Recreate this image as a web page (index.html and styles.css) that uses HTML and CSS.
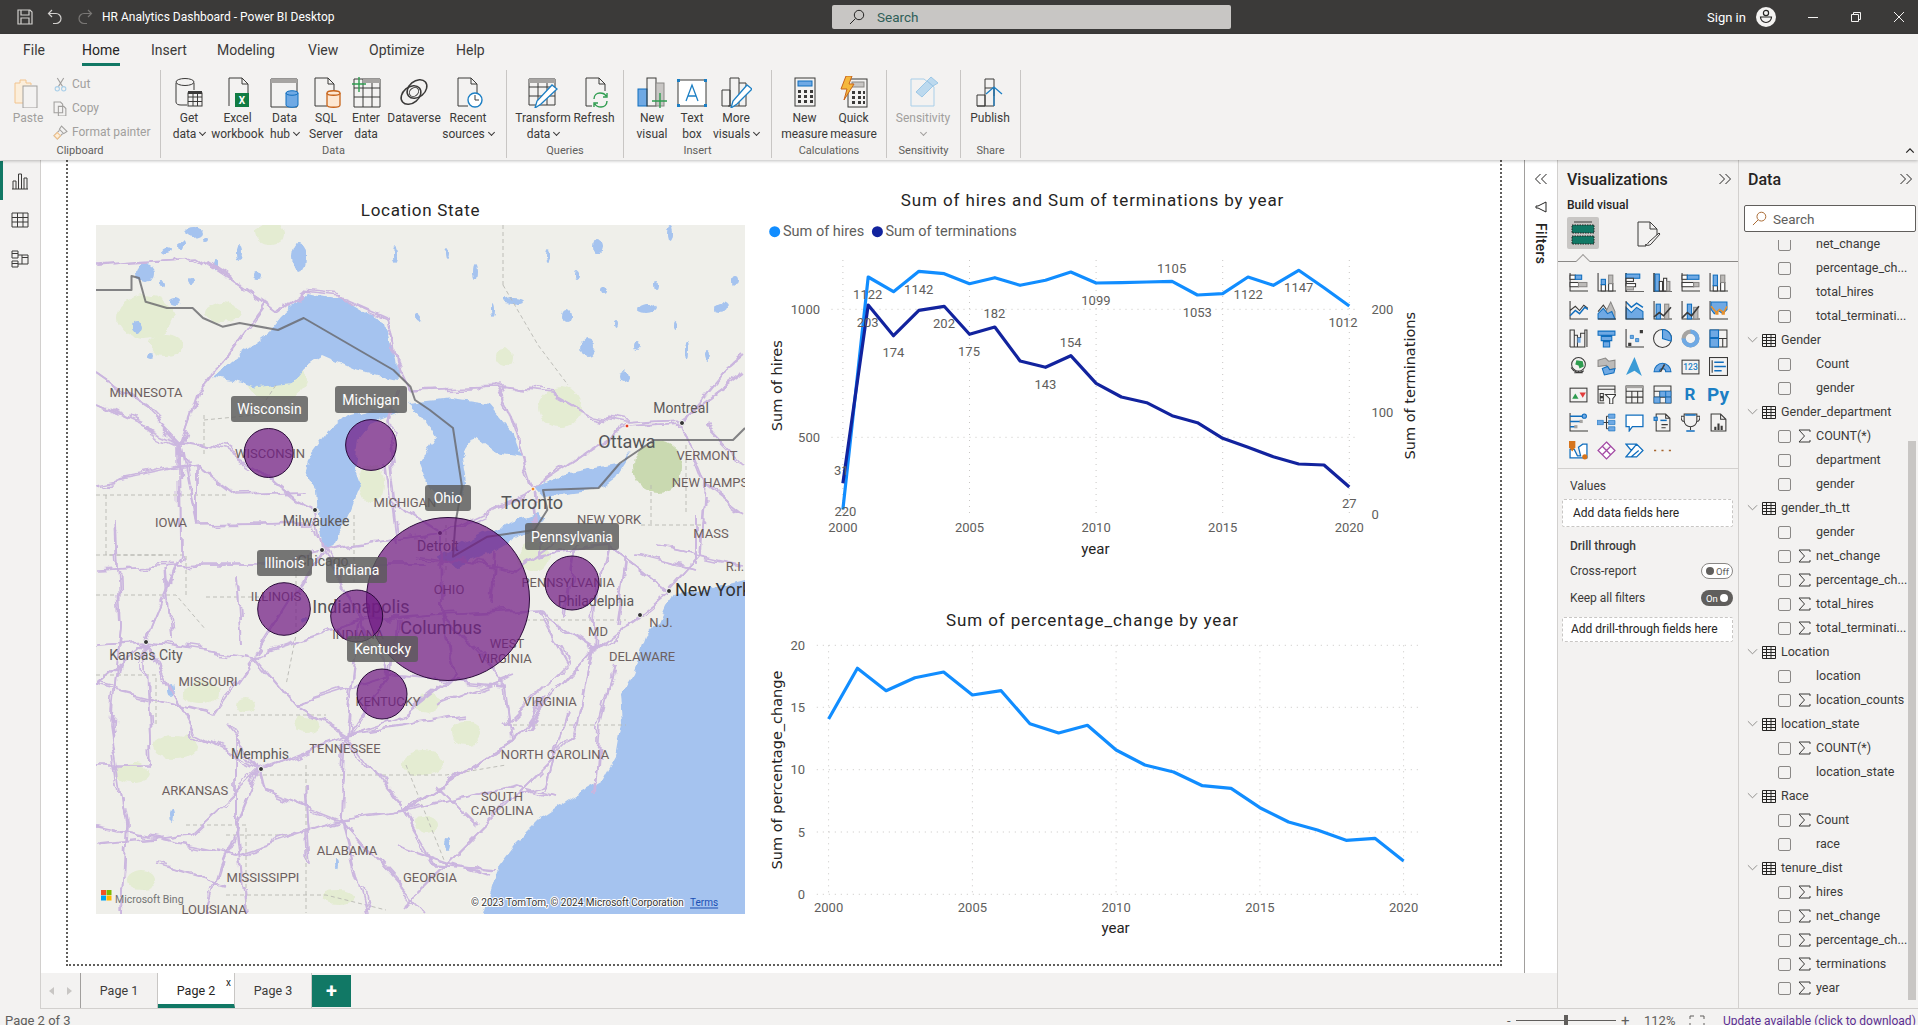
FILE: index.html
```html
<!DOCTYPE html>
<html lang="en">
<head>
    <meta charset="UTF-8">
    <title>HR Analytics Dashboard - Power BI Desktop</title>
    <link rel="stylesheet" href="styles.css">
</head>
<body>
<svg class="defs" width="0" height="0">
    <filter id="wig" x="-5%" y="-5%" width="110%" height="110%">
        <feTurbulence type="fractalNoise" baseFrequency="0.035" numOctaves="3" seed="4"/>
        <feDisplacementMap in="SourceGraphic" scale="11" xChannelSelector="R" yChannelSelector="G"/>
    </filter>
    <filter id="wig-fine" x="-5%" y="-5%" width="110%" height="110%">
        <feTurbulence type="fractalNoise" baseFrequency="0.07" numOctaves="3" seed="9"/>
        <feDisplacementMap in="SourceGraphic" scale="9" xChannelSelector="R" yChannelSelector="G"/>
    </filter>
    <symbol id="sg" viewBox="0 0 13 14"><path d="M12 3V1H1l5.5 6L1 13h11v-2"/></symbol>
    <symbol id="tb" viewBox="0 0 14 14"><path d="M.5 1.5h13v12H.5zM.5 4.5h13M.5 7.5h13M.5 10.5h13M4.5 1.5v12M9 1.5v12"/></symbol>
    <symbol id="cv" viewBox="0 0 12 8"><path d="M1 1l5 5 5-5"/></symbol>
    <symbol id="dc" viewBox="0 0 14 12"><path d="M6.5 1l-5 5 5 5M12.5 1l-5 5 5 5"/></symbol>
    <symbol id="dr" viewBox="0 0 14 12"><path d="M1.5 1l5 5-5 5M7.5 1l5 5-5 5"/></symbol>
    <symbol id="lens" viewBox="0 0 16 16"><circle cx="10" cy="6" r="4.7"/><path d="M6.5 9.5L1 15"/></symbol>
</svg>

<header class="titlebar">
    <svg class="tb-icon" viewBox="0 0 16 16"><path d="M1 1h12l2 2v12H1zM4 1v5h8V1M4 15v-6h8v6"/></svg>
    <svg class="tb-icon undo" viewBox="0 0 16 16"><path d="M5 1L1.5 4.5 5 8M2 4.5h7a5 5 0 0 1 0 10H6"/></svg>
    <svg class="tb-icon redo" viewBox="0 0 16 16"><path d="M11 1l3.5 3.5L11 8M14 4.5H7a5 5 0 0 0 0 10h3"/></svg>
    <div class="app-title">HR Analytics Dashboard - Power BI Desktop</div>
    <div class="global-search">
        <svg class="lens-dark"><use href="#lens"/></svg>
        <span>Search</span>
    </div>
    <div class="sign-in">Sign in</div>
    <svg class="avatar" viewBox="0 0 20 20"><circle cx="10" cy="10" r="10" class="av-bg"/><circle cx="10" cy="6" r="2.6" class="av-line"/><path class="av-line" d="M4.5 10h11a5.500 5.500 0 0 1-11 0z"/></svg>
    <svg class="win-btn" viewBox="0 0 12 12"><path d="M1 6.500h10"/></svg>
    <svg class="win-btn" viewBox="0 0 12 12"><path d="M1.500 3.500h7v7h-7zM3.500 3.500v-2h7v7h-2"/></svg>
    <svg class="win-btn" viewBox="0 0 12 12"><path d="M1 1l10 10M11 1L1 11"/></svg>
</header>

<section class="ribbon">
    <nav class="ribbon-tabs">
        <span>File</span>
        <span class="tab-active">Home</span>
        <span>Insert</span>
        <span>Modeling</span>
        <span>View</span>
        <span>Optimize</span>
        <span>Help</span>
    </nav>
    <div class="ribbon-body">
        <div class="group group-clipboard">
            <div class="group-items">
                <div class="rb-btn off w40">
                    <svg class="rb-icon" viewBox="0 0 32 32"><path class="o" d="M11 27H3V7h5V4h6v3h5v2"/><rect class="g0" x="11" y="10" width="14" height="22"/></svg>
                    <span>Paste</span>
                </div>
                <ul class="clip-list">
                    <li><svg viewBox="0 0 14 14"><path class="s-off" d="M4 1l5 8M10 1L5 9"/><circle class="s-blue" cx="4" cy="11" r="2"/><circle class="s-blue" cx="10" cy="11" r="2"/></svg>Cut</li>
                    <li><svg viewBox="0 0 14 14"><path class="s-off" d="M1 1h6l2 2v8H1zM5 5h5l2 2v7H5z"/></svg>Copy</li>
                    <li><svg viewBox="0 0 14 14"><path class="s-off" d="M8 1l5 5-3 2-4-4zM6 5L1 10l3 3 5-5"/><path class="o" d="M1 10l3 3 3-3-3-3z"/></svg>Format painter</li>
                </ul>
            </div>
            <div class="group-label">Clipboard</div>
        </div>

        <div class="group group-data">
            <div class="group-items">
                <div class="rb-btn w48">
                    <svg class="rb-icon" viewBox="0 0 32 32"><path class="d" d="M3 7v19c0 2 2 3 5 3h6M21 14V7"/><ellipse class="d" cx="12" cy="6" rx="9" ry="3.5"/><rect class="d" x="15" y="17" width="14" height="13"/><path class="d" d="M15 21h14M15 25.5h14M20 17v13M24.5 17v13"/><rect class="fill-d" x="15" y="15" width="14" height="3"/></svg>
                    <span>Get<br>data<i class="caret"></i></span>
                </div>
                <div class="rb-btn w49">
                    <svg class="rb-icon" viewBox="0 0 32 32"><path class="d" d="M7 30V2h13l6 6v10M20 2v6h6"/><rect class="fill-xl" x="13" y="17" width="14" height="14"/><text class="xl" x="20" y="28">X</text></svg>
                    <span>Excel<br>workbook</span>
                </div>
                <div class="rb-btn w45">
                    <svg class="rb-icon" viewBox="0 0 32 32"><path class="d" d="M2 3h26v28H2z"/><rect class="fill-g" x="2" y="3" width="26" height="4"/><path class="b" d="M17 17c0-3 12-3 12 0v12c0 3-12 3-12 0z"/><path class="b" d="M17 17c0 3 12 3 12 0"/></svg>
                    <span>Data<br>hub<i class="caret"></i></span>
                </div>
                <div class="rb-btn w38">
                    <svg class="rb-icon" viewBox="0 0 32 32"><path class="d" d="M5 30V2h13l6 6v8M18 2v6h6M5 30h12"/><path class="r" d="M17 17c0-3 13-3 13 0v12c0 3-13 3-13 0z"/><path class="r" d="M17 17c0 3 13 3 13 0"/></svg>
                    <span>SQL<br>Server</span>
                </div>
                <div class="rb-btn w42">
                    <svg class="rb-icon" viewBox="0 0 32 32"><path class="d" d="M4 3h26v28H4zM4 12h26M4 21h26M13 3v28M22 3v28"/><rect class="fill-g" x="13" y="3" width="17" height="4"/><path class="gr" d="M2 8h14M9 1v15"/></svg>
                    <span>Enter<br>data</span>
                </div>
                <div class="rb-btn w54">
                    <svg class="rb-icon" viewBox="0 0 32 32"><ellipse class="d2" cx="13" cy="19" rx="11" ry="8" transform="rotate(-40 13 19)"/><ellipse class="d2" cx="19" cy="13" rx="11" ry="8" transform="rotate(-40 19 13)"/><ellipse class="d" cx="16" cy="16" rx="5" ry="4" transform="rotate(-40 16 16)"/></svg>
                    <span>Dataverse</span>
                </div>
                <div class="rb-btn w54">
                    <svg class="rb-icon" viewBox="0 0 32 32"><path class="d" d="M6 30V2h13l6 6v10M19 2v6h6M6 30h10"/><circle class="clock" cx="23" cy="24" r="7"/><path class="d" d="M23 19v5h4"/></svg>
                    <span>Recent<br>sources<i class="caret"></i></span>
                </div>
            </div>
            <div class="group-label">Data</div>
        </div>

        <div class="group group-queries">
            <div class="group-items">
                <div class="rb-btn w48">
                    <svg class="rb-icon" viewBox="0 0 32 32"><path class="d" d="M2 3h26v26H2zM2 11h26M2 20h26M11 3v26M20 3v26"/><rect class="fill-g" x="2" y="3" width="26" height="4"/><path class="pen" d="M8 32l2-7L25 9l5 4-16 15z"/></svg>
                    <span>Transform<br>data<i class="caret"></i></span>
                </div>
                <div class="rb-btn w54">
                    <svg class="rb-icon" viewBox="0 0 32 32"><path class="d" d="M8 30V2h13l6 6v7M21 2v6h6M8 30h6"/><path class="gr" d="M16 23c0-4 3-6 6-6 3 0 5 1 6 3M29 17v4h-4M29 25c0 4-3 6-6 6-3 0-5-1-6-3M16 31v-4h4"/></svg>
                    <span>Refresh</span>
                </div>
            </div>
            <div class="group-label">Queries</div>
        </div>

        <div class="group group-insert">
            <div class="group-items">
                <div class="rb-btn w40">
                    <svg class="rb-icon" viewBox="0 0 32 32"><rect class="b-fill" x="2" y="13" width="9" height="17"/><rect class="d" x="11" y="2" width="9" height="28"/><rect class="g1" x="20" y="7" width="8" height="23"/><path class="gr" d="M16 25h15M24 17v15"/></svg>
                    <span>New<br>visual</span>
                </div>
                <div class="rb-btn w40">
                    <svg class="rb-icon" viewBox="0 0 32 32"><rect class="d-w" x="2" y="4" width="28" height="26"/><path class="blue-sq" d="M1 3h3v3H1zM28 3h3v3h-3zM1 28h3v3H1zM28 28h3v3h-3z"/><path class="blue" d="M10 25l6-16 6 16M12 20h8"/></svg>
                    <span>Text<br>box</span>
                </div>
                <div class="rb-btn w48">
                    <svg class="rb-icon" viewBox="0 0 32 32"><path class="d" d="M2 14h8v16H2zM10 30V2h9v28M19 7h7v23H8"/><path class="pen" d="M11 32l2-7L27 9l5 4-15 15z"/></svg>
                    <span>More<br>visuals<i class="caret"></i></span>
                </div>
            </div>
            <div class="group-label">Insert</div>
        </div>

        <div class="group group-calc">
            <div class="group-items">
                <div class="rb-btn w49">
                    <svg class="rb-icon" viewBox="0 0 32 32"><rect class="d" x="6" y="2" width="20" height="28"/><rect class="b-fill" x="9" y="5" width="14" height="5"/><path class="keys" d="M9 14h3v3H9zM15 14h3v3h-3zM21 14h3v3h-3zM9 19h3v3H9zM15 19h3v3h-3zM21 19h3v3h-3zM9 24h3v3H9zM15 24h3v3h-3zM21 24h3v3h-3z"/></svg>
                    <span>New<br>measure</span>
                </div>
                <div class="rb-btn w49">
                    <svg class="rb-icon" viewBox="0 0 32 32"><rect class="d" x="10" y="3" width="19" height="28"/><rect class="g1" x="14" y="6" width="12" height="5"/><path class="keys" d="M14 15h3v3h-3zM20 15h3v3h-3zM25 15h2v3h-2zM14 20h3v3h-3zM20 20h3v3h-3zM25 20h2v3h-2zM14 25h3v3h-3zM20 25h3v3h-3zM25 25h2v3h-2z"/><path class="bolt" d="M8 0h6l-3 8h5L6 24l3-11H3z"/></svg>
                    <span>Quick<br>measure</span>
                </div>
            </div>
            <div class="group-label">Calculations</div>
        </div>

        <div class="group group-sens">
            <div class="group-items">
                <div class="rb-btn off w60">
                    <svg class="rb-icon" viewBox="0 0 32 32"><path class="s-blue" d="M4 3h13l10 8v19H4z"/><path class="lb-fill" d="M9 16L20 5l6 5-11 11zM20 5l4-4 7 6-5 3z"/></svg>
                    <span>Sensitivity<br><i class="caret"></i></span>
                </div>
            </div>
            <div class="group-label">Sensitivity</div>
        </div>

        <div class="group group-share">
            <div class="group-items">
                <div class="rb-btn w50">
                    <svg class="rb-icon" viewBox="0 0 32 32"><path class="d" d="M3 30V19h8v11zM11 30V12h9v18zM20 20V3h-9v9M3 30h8"/><path class="blue" d="M20 30V11M12 18l8-7 8 7"/></svg>
                    <span>Publish</span>
                </div>
            </div>
            <div class="group-label">Share</div>
        </div>

        <svg class="ribbon-collapse" viewBox="0 0 12 8"><path d="M1.5 6.5L6 2l4.500 4.500"/></svg>
    </div>
</section>

<main class="workspace">
    <aside class="rail">
        <div class="rail-item rail-active">
            <svg viewBox="0 0 18 18"><path class="d" d="M1 17h16M2 17V9h3v8M7.5 17V2h3v15M13 17V6h3v11"/></svg>
        </div>
        <div class="rail-item">
            <svg viewBox="0 0 18 18"><path class="d" d="M1 2h16v14H1zM1 6.5h16M1 11h16M6.5 2v14M12 2v14"/></svg>
        </div>
        <div class="rail-item">
            <svg viewBox="0 0 18 18"><path class="d" d="M1 1h6v7H1zM1 3.5h6M1 11h6v6H1zM1 13.500h6M11 5h6v9h-6zM11 7.500h6M7 5h4M7 14h4"/></svg>
        </div>
    </aside>

    <div class="center">
        <div class="canvas-row">
            <div class="canvas">
                <div class="report-page">
                    <div class="map-visual">
                        <div class="visual-title">Location State</div>
                        <svg class="map" viewBox="0 0 649 689">
                            <rect class="m-land" width="649" height="689"/>
                            <g class="m-green">
                                <ellipse cx="49" cy="92" rx="28" ry="22"/><ellipse cx="126" cy="87" rx="18" ry="10"/><ellipse cx="173" cy="8" rx="15" ry="12"/>
                                <ellipse cx="464" cy="182" rx="22" ry="20"/><ellipse class="m-green2" cx="562" cy="242" rx="24" ry="26"/><ellipse cx="182" cy="155" rx="30" ry="20"/>
                                <ellipse cx="276" cy="258" rx="12" ry="20"/><ellipse cx="408" cy="132" rx="8" ry="10"/><ellipse cx="438" cy="332" rx="15" ry="15"/>
                                <ellipse cx="105" cy="468" rx="18" ry="12"/><ellipse cx="331" cy="478" rx="12" ry="10"/><ellipse cx="370" cy="508" rx="14" ry="12"/>
                                <ellipse cx="327" cy="538" rx="20" ry="12"/><ellipse cx="79" cy="522" rx="22" ry="12"/><ellipse cx="37" cy="548" rx="18" ry="10"/>
                                <ellipse cx="45" cy="655" rx="15" ry="10"/><ellipse cx="242" cy="672" rx="16" ry="8"/><ellipse cx="70" cy="120" rx="16" ry="12"/>
                                <ellipse cx="330" cy="600" rx="12" ry="8"/><ellipse cx="210" cy="500" rx="12" ry="8"/><ellipse cx="150" cy="480" rx="10" ry="8"/>
                            </g>
                            <g class="m-water">
                                <polygon points="649,355 609,365 579,368 569,382 562,398 550,412 543,432 537,448 524,468 526,498 520,532 507,555 477,572 447,592 421,618 400,645 385,695 655,695 655,355"/>
                                <polygon points="116,152 135,135 173,108 186,92 212,68 250,75 289,98 300,135 302,155 259,145 225,130 208,142 195,158 161,162 139,155"/>
                                <polygon points="293,182 250,192 233,205 216,228 210,248 220,265 223,298 227,323 240,318 255,285 265,258 259,242 262,215 276,198 302,188"/>
                                <polygon points="312,178 357,173 391,178 417,208 426,232 400,228 379,212 366,232 370,258 362,282 332,262 323,238 340,212 327,192"/>
                                <polygon points="340,332 387,308 443,288 451,295 404,322 362,342"/>
                                <polygon points="438,262 473,248 524,238 537,225 520,252 503,265 447,272"/>
                            </g>
                            <g class="m-water m-lakes">
                                <ellipse cx="203" cy="32" rx="7" ry="15"/><ellipse cx="50" cy="48" rx="9" ry="9"/><ellipse cx="97" cy="8" rx="9" ry="5"/>
                                <ellipse cx="143" cy="28" rx="3" ry="6"/><ellipse cx="80" cy="75" rx="6" ry="3"/><ellipse cx="41" cy="102" rx="6" ry="5"/>
                                <ellipse cx="54" cy="131" rx="4" ry="3"/><ellipse cx="417" cy="75" rx="10" ry="3"/><ellipse cx="550" cy="83" rx="10" ry="6"/>
                                <ellipse cx="624" cy="82" rx="7" ry="5"/><ellipse cx="492" cy="122" rx="8" ry="9"/><ellipse cx="528" cy="150" rx="4" ry="6"/>
                                <ellipse cx="502" cy="22" rx="5" ry="8"/><ellipse cx="575" cy="8" rx="3" ry="8"/><ellipse cx="507" cy="65" rx="3" ry="3"/>
                                <ellipse cx="592" cy="125" rx="2" ry="8"/><ellipse cx="396" cy="85" rx="2" ry="6"/><ellipse cx="323" cy="92" rx="3" ry="5"/>
                                <ellipse cx="379" cy="48" rx="2" ry="8"/><ellipse cx="300" cy="30" rx="2" ry="7"/><ellipse cx="470" cy="90" rx="4" ry="6"/>
                                <ellipse cx="540" cy="120" rx="3" ry="5"/><ellipse cx="160" cy="50" rx="4" ry="4"/><ellipse cx="120" cy="40" rx="3" ry="6"/>
                                <ellipse cx="70" cy="25" rx="5" ry="3"/><ellipse cx="610" cy="130" rx="3" ry="6"/><ellipse cx="450" cy="30" rx="2" ry="7"/>
                                <ellipse cx="75" cy="590" rx="2" ry="6"/><ellipse cx="210" cy="395" rx="3" ry="3"/><ellipse cx="75" cy="465" rx="3" ry="6"/><ellipse cx="240" cy="640" rx="2" ry="5"/><ellipse cx="350" cy="620" rx="3" ry="6"/>
                                <ellipse cx="85" cy="20" rx="3" ry="4"/><ellipse cx="110" cy="15" rx="3" ry="3"/><ellipse cx="65" cy="60" rx="3" ry="3"/><ellipse cx="95" cy="55" rx="3" ry="3"/><ellipse cx="560" cy="60" rx="2" ry="5"/>
                                <ellipse cx="580" cy="100" rx="2" ry="4"/><ellipse cx="480" cy="50" rx="2" ry="4"/><ellipse cx="520" cy="100" rx="2" ry="4"/><ellipse cx="350" cy="30" rx="2" ry="6"/><ellipse cx="640" cy="55" rx="3" ry="4"/>
                            </g>
                            <g class="m-dash">
                                <path d="M407 0v60M407 60l35 60 30 40"/>
                                <path d="M108 190v40M108 195l52-5 20-30"/>
                                <path d="M0 270h130M10 270v60h60"/>
                                <path d="M0 330h90v40M110 372h60"/>
                                <path d="M0 370h80l30 35"/>
                                <path d="M200 335v75l-10 50"/>
                                <path d="M258 290v70M350 345v-45"/>
                                <path d="M130 490h100M0 450h60v50"/>
                                <path d="M160 550h190l60-10"/>
                                <path d="M90 600h60v88M130 610h70"/>
                                <path d="M210 540v148M310 540l40 100"/>
                                <path d="M545 300h60M555 260v40M590 220v70"/>
                                <path d="M430 395h100M410 500h120"/>
                                <path d="M130 670h100l60 15"/>
                            </g>
                            <g id="roads" class="m-road">
                                <path d="M0 40L37 37 101 33 135 55 169 78 182 88 208 68 250 73 293 92 302 138 315 165 400 162 456 168 498 192 528 198 584 195 649 148"/>
                                <path d="M84 217L130 225 170 250 200 275 219 285 226 325 344 308 437 264 531 201 586 198M0 147L50 182 84 217"/>
                                <path d="M84 217L100 170 115 152 169 78M84 217L0 180M84 217L85 330 50 417M84 217L100 300"/>
                                <path d="M226 325L170 340 100 340 0 345M226 325L160 430M226 325L264 396 158 433 50 417 0 420"/>
                                <path d="M264 396L345 390 440 385 498 423M264 396L250 510 165 544M264 396L295 450 250 510 246 595"/>
                                <path d="M344 308L345 390 410 460 417 515M344 308L300 280 290 195 300 165M437 264L445 330 512 320 573 366"/>
                                <path d="M437 264L410 180 400 162M586 198L610 260 605 330 573 366M586 198L625 150 649 130"/>
                                <path d="M649 240L610 200M610 260L649 290M573 366L544 390 498 423 417 515 309 587 246 595 170 565 165 544"/>
                                <path d="M498 423L480 510 420 570 370 620 310 680M417 515L309 587M250 510L309 587 420 560 460 570"/>
                                <path d="M165 544L100 510 50 417M165 544L95 610 0 620M165 544L125 640 110 689M246 595L140 630 0 600M246 595L270 689M246 595L330 689"/>
                                <path d="M50 417L0 460M50 417L55 540 0 540M160 433L200 480 295 450 410 460M160 433L120 490 0 460M250 510L200 480"/>
                                <path d="M295 450L300 395M345 390L360 450 310 490 250 510M440 385L470 440 410 500M512 320L500 380 498 423M573 366L512 320"/>
                                <path d="M560 320L649 340M600 290L600 340M540 330L600 345M520 440L505 500 500 570M470 490L450 560 420 570"/>
                                <path d="M0 260L100 240 140 270 210 268M100 300L220 298M210 350L226 325M100 240L100 300M320 330L420 345 470 310"/>
                                <path d="M340 480L420 450M300 620L390 650M165 544L130 500M309 587L340 640 400 645M250 510L370 490"/>
                                <path d="M20 300L25 400 15 500 30 600 25 689M140 510L140 600 150 689M210 560L215 640M60 640L130 660M340 560L380 600M430 500L450 470"/>
                                <path d="M290 240L300 320M240 340L330 340M140 350L145 420M70 345L75 415M400 330L395 380M480 320L470 390M530 330L520 400"/>
                            </g>
                            <use href="#roads" class="m-road-core"/>
                            <path class="m-border" d="M0 65H35.500V51L43 53 49.600 76.700 71 83H96.600L107 93 126.500 101.700 143.600 98 182 105 207.700 93 297.400 145 314.500 161.700 319 175 333.800 185 357 203 366 261.700 359.400 298 357 331.700 391.400 311.700 438.500 305 451.300 285 447 265 502.600 263 524 238 558 215H637L649 203"/>

                            <g class="m-st">
                                <text x="50" y="167">MINNESOTA</text><text x="611" y="230">VERMONT</text><text x="614" y="257">NEW HAMPS</text>
                                <text x="309" y="277">MICHIGAN</text><text x="513" y="294">NEW YORK</text><text x="615" y="308">MASS</text>
                                <text x="75" y="297">IOWA</text><text x="639" y="341">R.I.</text><text x="174" y="228">WISCONSIN</text>
                                <text x="472" y="357">PENNSYLVANIA</text><text x="353" y="364">OHIO</text><text x="180" y="371">ILLINOIS</text>
                                <text x="565" y="397">N.J.</text><text x="502" y="406">MD</text><text x="262" y="409">INDIANA</text>
                                <text x="411" y="418">WEST</text><text x="409" y="433">VIRGINIA</text><text x="546" y="431">DELAWARE</text>
                                <text x="112" y="456">MISSOURI</text><text x="292" y="476">KENTUCKY</text><text x="454" y="476">VIRGINIA</text>
                                <text x="249" y="523">TENNESSEE</text><text x="459" y="529">NORTH CAROLINA</text><text x="99" y="565">ARKANSAS</text>
                                <text x="406" y="571">SOUTH</text><text x="406" y="585">CAROLINA</text><text x="251" y="625">ALABAMA</text>
                                <text x="334" y="652">GEORGIA</text><text x="167" y="652">MISSISSIPPI</text><text x="118" y="684">LOUISIANA</text>
                            </g>
                            <g class="m-ct">
                                <text x="585" y="183">Montreal</text><text x="220" y="296">Milwaukee</text><text x="342" y="321">Detroit</text>
                                <text x="227" y="336">Chicago</text><text x="500" y="376">Philadelphia</text><text x="50" y="430">Kansas City</text><text x="164" y="529">Memphis</text>
                            </g>
                            <g class="m-big">
                                <text x="531" y="216">Ottawa</text><text x="436" y="277">Toronto</text><text x="265" y="381">Indianapolis</text>
                                <text x="345" y="402">Columbus</text><text x="579" y="364" class="m-left">New York</text>
                            </g>
                            <g class="m-dots">
                                <circle cx="219" cy="285" r="2.500"/><circle cx="226" cy="325" r="2.500"/><circle cx="344" cy="308" r="2.500"/><circle cx="586" cy="198" r="2.500"/>
                                <circle cx="573" cy="366" r="2.500"/><circle cx="544" cy="390" r="2.500"/><circle cx="50" cy="417" r="2.500"/><circle cx="165" cy="544" r="2.500"/>
                            </g>
                            <circle class="m-cap" cx="531" cy="201" r="2"/><circle class="m-cap2" cx="437" cy="264" r="2"/>

                            <g class="m-bubble">
                                <circle cx="172.600" cy="228" r="24.500"/><circle cx="275" cy="220" r="25.400"/><circle cx="352" cy="374" r="81.500"/>
                                <circle cx="476" cy="358" r="27"/><circle cx="188" cy="384" r="26.300"/><circle cx="260.700" cy="391" r="26"/><circle cx="286" cy="469" r="25"/>
                            </g>
                            <g class="m-tip">
                                <rect x="135" y="171" width="77" height="26" rx="3"/><rect x="239" y="161" width="72" height="27" rx="3"/><rect x="329" y="260" width="46" height="26" rx="3"/>
                                <rect x="429" y="298" width="94" height="27" rx="3"/><rect x="161" y="325" width="55" height="26" rx="3"/><rect x="230" y="332" width="61" height="26" rx="3"/><rect x="251" y="411" width="71" height="26" rx="3"/>
                            </g>
                            <g class="m-tip-text">
                                <text x="173.500" y="184">Wisconsin</text><text x="275" y="174.500">Michigan</text><text x="352" y="273">Ohio</text>
                                <text x="476" y="311.500">Pennsylvania</text><text x="188.500" y="338">Illinois</text><text x="260.500" y="345">Indiana</text><text x="286.500" y="424">Kentucky</text>
                            </g>
                            <g>
                                <rect class="ms-r" x="5" y="665" width="5" height="5"/><rect class="ms-g" x="10.500" y="665" width="5" height="5"/>
                                <rect class="ms-b" x="5" y="670.500" width="5" height="5"/><rect class="ms-y" x="10.500" y="670.500" width="5" height="5"/>
                            </g>
                            <text class="m-bing" x="19" y="674">Microsoft Bing</text>
                            <text class="m-copy" x="375" y="677">© 2023 TomTom, © 2024 Microsoft Corporation</text>
                            <text class="m-terms" x="594" y="677">Terms</text>
                        </svg>
                    </div>

                    <div class="chart-col">
                        <svg class="chart chart-top" viewBox="0 0 660 400">
                            <text class="c-title" x="332.500" y="20">Sum of hires and Sum of terminations by year</text>
                            <circle class="dot-hires" cx="14.700" cy="51.700" r="5.500"/>
                            <text class="c-legend" x="23" y="51.700">Sum of hires</text>
                            <circle class="dot-term" cx="117.400" cy="51.700" r="5.500"/>
                            <text class="c-legend" x="125.400" y="51.700">Sum of terminations</text>

                            <path class="c-grid" d="M71.500 129.300H597.600M71.500 257.300H597.600M82.900 80V334M209.500 80V334M336.100 80V334M462.700 80V334M589.300 80V334"/>

                            <polyline class="line-hires" points="82.900,329.300 108.200,97 133.500,111.700 158.900,91.300 184.200,93.700 209.500,103.700 234.800,97.700 260.100,105.300 285.500,100.300 310.800,92 336.100,103 361.400,102.700 386.700,102 412.100,101.300 437.400,115 462.700,113.700 488,97 513.300,105.300 538.700,90.300 564,107.700 589.300,126"/>
                            <polyline class="line-term" points="82.900,303.300 108.200,125 133.500,155.700 158.900,130.300 184.200,126.300 209.500,154.300 234.800,147 260.100,181 285.500,187.300 310.800,175.700 336.100,203.300 361.400,217 386.700,222.700 412.100,235.700 437.400,242.700 462.700,258.300 488,267.300 513.300,276.700 538.700,284 564,285 589.300,307"/>

                            <g class="c-tick c-end">
                                <text x="60" y="129.300">1000</text><text x="60" y="257.300">500</text>
                            </g>
                            <g class="c-tick c-start">
                                <text x="611.500" y="129.300">200</text><text x="611.500" y="232.700">100</text><text x="611.500" y="334.300">0</text>
                            </g>
                            <g class="c-tick">
                                <text x="82.900" y="347.700">2000</text><text x="209.500" y="347.700">2005</text><text x="336.100" y="347.700">2010</text><text x="462.700" y="347.700">2015</text><text x="589.300" y="347.700">2020</text>
                            </g>
                            <g class="c-tick">
                                <text x="107.700" y="114.700">1122</text><text x="107.700" y="142.700">203</text><text x="158.700" y="109.700">1142</text>
                                <text x="133.400" y="172.700">174</text><text x="184" y="143.300">202</text><text x="234.400" y="133.700">182</text>
                                <text x="209" y="171.700">175</text><text x="310.600" y="162.700">154</text><text x="285.400" y="204.700">143</text>
                                <text x="335.900" y="120.700">1099</text><text x="411.600" y="88.700">1105</text><text x="437.300" y="132.700">1053</text>
                                <text x="488.200" y="114.700">1122</text><text x="538.700" y="107.300">1147</text><text x="583" y="142.700">1012</text>
                                <text x="81.200" y="290">31</text><text x="85.400" y="331.700">220</text><text x="589.200" y="323.700">27</text>
                            </g>
                            <text class="c-axis" transform="translate(16.800 205.700) rotate(-90)">Sum of hires</text>
                            <text class="c-axis" transform="translate(650 205.700) rotate(-90)">Sum of terminations</text>
                            <text class="c-year" x="335.400" y="369">year</text>
                        </svg>

                        <svg class="chart chart-bottom" viewBox="0 0 660 350">
                            <text class="c-title" x="332.500" y="20">Sum of percentage_change by year</text>
                            <path class="c-grid" d="M56.800 45.300H658M56.800 107.300H658M56.800 169.700H658M56.800 232H658M56.800 294.300H658M68.600 45.300V294.300M212.400 45.300V294.300M356.100 45.300V294.300M499.900 45.300V294.300M643.600 45.300V294.300"/>
                            <polyline class="line-hires" points="68.600,119 97.400,68.300 126.100,90.700 154.900,77.700 183.600,72 212.400,95 241.100,90.700 269.900,123.700 298.600,133 327.400,125.300 356.100,150 384.900,165 413.600,172 442.400,185.700 471.100,188.300 499.900,207.700 528.600,222 557.400,230 586.100,240.300 614.900,238.300 643.600,261"/>
                            <g class="c-tick c-end">
                                <text x="45" y="45.300">20</text><text x="45" y="107.300">15</text><text x="45" y="169.700">10</text><text x="45" y="232">5</text><text x="45" y="294.300">0</text>
                            </g>
                            <g class="c-tick">
                                <text x="68.600" y="307.700">2000</text><text x="212.400" y="307.700">2005</text><text x="356.100" y="307.700">2010</text><text x="499.900" y="307.700">2015</text><text x="643.600" y="307.700">2020</text>
                            </g>
                            <text class="c-axis" transform="translate(16.800 170) rotate(-90)">Sum of percentage_change</text>
                            <text class="c-year" x="355.600" y="328.300">year</text>
                        </svg>
                    </div>
                </div>
            </div>

            <aside class="filters">
                <svg class="chev"><use href="#dc"/></svg>
                <svg class="funnel" viewBox="0 0 12 12"><path d="M11 1L3 5H1v2h2l8 4z"/></svg>
                <div class="filters-label">Filters</div>
            </aside>
        </div>

        <div class="page-tabs">
            <div class="tab-nav"><i class="tri-l"></i><i class="tri-r"></i></div>
            <div class="page-tab">Page 1</div>
            <div class="page-tab page-current">Page 2<span class="tab-x">x</span></div>
            <div class="page-tab">Page 3</div>
            <div class="page-add">+</div>
        </div>
    </div>

    <aside class="vis-pane">
        <div class="pane-head">
            <span>Visualizations</span>
            <svg class="chev"><use href="#dr"/></svg>
        </div>
        <div class="build-label">Build visual</div>
        <div class="build-row">
            <div class="build-active">
                <svg viewBox="0 0 24 26"><path class="d" d="M3 1h18"/><rect class="tg" x="1" y="4" width="22" height="8"/><rect class="tg" x="1" y="15" width="22" height="8"/></svg>
            </div>
            <svg class="format-icon" viewBox="0 0 24 26"><path class="d" d="M1 25V1h12l7 7v6M13 1v7h7M1 25h8"/><path class="d" d="M8 24c3 0 3-3 5-4l9-8 1 1-8 9c-1 2-4 3-7 2z"/></svg>
        </div>
        <div class="vis-sep"><i></i></div>

        <div class="viz-grid">
            <svg viewBox="0 0 18 18"><path class="d" d="M1 0V17H18"/><rect class="w" x="1" y="2" width="5" height="4"/><rect class="b" x="6" y="2" width="6" height="4"/><rect class="w" x="1" y="9" width="8" height="4"/><rect class="g" x="9" y="9" width="8" height="4"/></svg>
            <svg viewBox="0 0 18 18"><path class="d" d="M1 0V17H18"/><rect class="w" x="4" y="11" width="4" height="6"/><rect class="b" x="4" y="6" width="4" height="5"/><rect class="w" x="11" y="10" width="4" height="7"/><rect class="g" x="11" y="2" width="4" height="8"/></svg>
            <svg viewBox="0 0 18 18"><path class="d2" d="M1 0V18H18"/><rect class="b" x="1" y="1" width="13" height="4"/><rect class="w" x="1" y="5" width="7" height="3"/><rect class="w" x="1" y="10" width="9" height="3"/><rect class="g" x="1" y="13" width="7" height="3"/></svg>
            <svg viewBox="0 0 18 18"><path class="d2" d="M1 0V18H18"/><rect class="b" x="2" y="1" width="4" height="16"/><rect class="w" x="6" y="8" width="3" height="9"/><rect class="w" x="10" y="5" width="3" height="12"/><rect class="g" x="13" y="8" width="3" height="9"/></svg>
            <svg viewBox="0 0 18 18"><path class="d" d="M1 0V17H18"/><rect class="w" x="1" y="2" width="5" height="4"/><rect class="b" x="6" y="2" width="11" height="4"/><rect class="w" x="1" y="9" width="11" height="4"/><rect class="g" x="12" y="9" width="5" height="4"/></svg>
            <svg viewBox="0 0 18 18"><path class="d" d="M1 0V17H18"/><rect class="w" x="4" y="12" width="4" height="5"/><rect class="b" x="4" y="2" width="4" height="10"/><rect class="w" x="11" y="9" width="4" height="8"/><rect class="g" x="11" y="2" width="4" height="7"/></svg>

            <svg viewBox="0 0 18 18"><path class="d" d="M1 0V17H18M1 9l5-4 4 4 4-5 4 3"/><path class="bl" d="M1 14l5-5 4 3 5-6 3 2"/></svg>
            <svg viewBox="0 0 18 18"><path class="g" d="M8 11l5-10 4 9v7H8z"/><path class="b" d="M1 17v-5l5-5 4 5 4-2 3 7z"/><path class="d" d="M1 10l5-6 3 4M1 17H18"/></svg>
            <svg viewBox="0 0 18 18"><path class="b" d="M1 6l5 5 5-5 6 4v7H1z"/><path class="bl" d="M1 1l5 5 5-4 6 4"/><path class="d" d="M1 0V17H18"/></svg>
            <svg viewBox="0 0 18 18"><path class="d" d="M1 0V17H18"/><rect class="b" x="3" y="3" width="4" height="14"/><rect class="g" x="11" y="3" width="4" height="14"/><path class="d2" d="M1 15l5-4 4 3 7-8"/></svg>
            <svg viewBox="0 0 18 18"><path class="d" d="M1 0V17H18"/><rect class="b" x="6" y="3" width="4" height="14"/><rect class="g" x="12" y="6" width="4" height="11"/><path class="d2" d="M1 16l5-5 4 3 7-9"/></svg>
            <svg viewBox="0 0 18 18"><path class="d" d="M1 0V17H18"/><path class="b" d="M2 1h15v7l-4 4-4-3-4 3-3-4z"/><path class="oo" d="M2 5l5 6 3-3 4 3 3-6"/><path class="fill-o" d="M6 10h3v3H6zM12 10h3v3h-3z"/></svg>

            <svg viewBox="0 0 18 18"><path class="d" d="M1 17V1h4v16M5 17V6h3v11M8 17V8h3V4h4v13H1M15 17V1h2v16"/><path class="bs" d="M8 8h3v5H8z"/></svg>
            <svg viewBox="0 0 18 18"><path class="b-fill" d="M1 2h16v4H1zM4 7h10v4H4zM6 12h6v5H6z"/></svg>
            <svg viewBox="0 0 18 18"><path class="d" d="M1 0V17H18"/><path class="fill-bl" d="M5 6h3v3H5zM10 9h3v3h-3z"/><path class="fill-d" d="M14 1h3v3h-3zM3 13h3v3H3z"/></svg>
            <svg viewBox="0 0 18 18"><circle class="d" cx="9" cy="9" r="8.5"/><path class="b-fill" d="M9 9V.5a8.500 8.500 0 0 1 8 11z"/></svg>
            <svg viewBox="0 0 18 18"><circle class="g-ring" cx="9" cy="9" r="6.5"/><path class="b-ring" d="M9 2.500a6.500 6.500 0 1 1-6.500 6.500"/></svg>
            <svg viewBox="0 0 18 18"><path class="d" d="M1 1h16v16H1zM9 1v16M9 9h8M13 9v8"/><path class="b-fill" d="M1 1h8v7H1zM1 9h8v8H1z"/></svg>

            <svg viewBox="0 0 18 18"><circle class="d" cx="9" cy="7" r="6.5"/><path class="fill-gr" d="M7 3l6 1 1 5-4 2-1-3-3-1z"/><path class="d" d="M5 15h8M9 13v2M2 10c2 4 8 6 12 3"/></svg>
            <svg viewBox="0 0 18 18"><path class="g" d="M1 3l7-2 3 3 6-1v8l-6 1-2-4-8 1z"/><path class="b" d="M5 11l5-2 2 3 5-1-1 4-9 2z"/></svg>
            <svg viewBox="0 0 18 18"><path class="fill-grad" d="M9 0l7 18-7-5-8 4z"/></svg>
            <svg viewBox="0 0 18 18"><path class="b-fill" d="M1 14a8 8 0 0 1 16 0h-5a3 3 0 0 0-6 0z"/><path class="d2" d="M7 14l4-7"/></svg>
            <svg viewBox="0 0 18 18"><rect class="d" x="1" y="3" width="16" height="13"/><text class="num" x="9" y="9.500">123</text></svg>
            <svg viewBox="0 0 18 18"><rect class="d" x=".5" y=".5" width="17" height="17"/><path class="bl" d="M5 5h9M5 9h11M5 13h7"/><path class="d" d="M3 3v12"/></svg>

            <svg viewBox="0 0 18 18"><rect class="d" x="1" y="3" width="16" height="13"/><path class="fill-gr" d="M3 13l3-5 3 5z"/><path class="fill-red" d="M10 7h6l-3 5z"/></svg>
            <svg viewBox="0 0 18 18"><path class="d" d="M1 17V1h16v7M1 17h6M1 4h16M3 8h3v3H3zM3 12h3v3H3z"/><path class="funnel-d" d="M8 9h10l-3 4v5h-3v-5z"/></svg>
            <svg viewBox="0 0 18 18"><path class="d" d="M1 1h16v16H1zM1 6h16M1 11.5h16M6.5 6v11M12 6v11"/><rect class="fill-g" x="1" y="1" width="16" height="2"/></svg>
            <svg viewBox="0 0 18 18"><path class="d" d="M1 1h16v16H1zM1 6h16M1 11.5h16M6.5 6v11M12 6v11"/><path class="fill-bl" d="M12 6h5v5h-5zM1 11.500h5.500V17H1zM12 11.500h5V17h-5zM6.500 6H12v5H6.500z"/></svg>
            <span class="viz-letter">R</span>
            <span class="viz-letter viz-py">Py</span>

            <svg viewBox="0 0 18 18"><path class="d" d="M1 0V17H18"/><path class="bl" d="M1 3h12M1 8h10M1 13h6"/><circle class="b-fill" cx="14.5" cy="3" r="2"/><rect class="fill-g" x="10" y="6.500" width="3" height="3"/><rect class="fill-g" x="5" y="11.500" width="3" height="3"/></svg>
            <svg viewBox="0 0 18 18"><path class="d" d="M6 9h3M9 3v12M9 3h2M9 9h2M9 15h2"/><path class="fill-bl" d="M0 7h6v4H0zM11 1h6v4h-6zM11 7h6v4h-6zM11 13h6v4h-6z"/></svg>
            <svg viewBox="0 0 18 18"><path class="blue-l" d="M1 2h16v11H7l-3 4v-4H1z"/></svg>
            <svg viewBox="0 0 18 18"><path class="d" d="M3 1h9l4 4v12H3zM12 1v4h4M8 11h6M8 14h4"/><rect class="b-fill" x="1" y="4" width="3" height="3"/><path class="bl" d="M7 7h6"/></svg>
            <svg viewBox="0 0 18 18"><path class="d" d="M3 1h12v6c0 4-3 6-6 6s-6-2-6-6zM3 3H0c0 3 1 5 3 5M15 3h3c0 3-1 5-3 5M9 13v3"/><path class="bl" d="M5 17h8M4 2h10"/></svg>
            <svg viewBox="0 0 18 18"><path class="d" d="M2 1h9l5 5v11H2zM11 1v5h5"/><path class="fill-d" d="M5 13h2v3H5zM8 10h2v6H8zM11 12h2v4h-2z"/></svg>

            <svg viewBox="0 0 18 18"><path class="blue-l" d="M1 8h4l3 6h3l-2-8 4-3h4v13H1z"/><path class="fill-or" d="M0 0h6v6l-3 4-3-4z"/><circle class="fill-or" cx="15" cy="15" r="2.5"/></svg>
            <svg viewBox="0 0 18 18"><path class="pur" d="M9 1l8 8-8 8-8-8zM5 5l4 4 4-4M5 13l4-4 4 4"/></svg>
            <svg viewBox="0 0 18 18"><path class="blue-l" d="M1 3h10l6 6-6 6H1l5-6zM6 9l5-6M6 15l7-6"/></svg>
            <svg viewBox="0 0 18 18"><path class="dots" d="M1 9h2M8 9h2M15 9h2"/></svg>
        </div>
        <div class="vis-sep2"></div>

        <div class="well-label">Values</div>
        <div class="field-well tall">Add data fields here</div>
        <div class="drill-title">Drill through</div>
        <div class="toggle-row first">
            <span>Cross-report</span>
            <span class="toggle t-off"><i></i>Off</span>
        </div>
        <div class="toggle-row">
            <span>Keep all filters</span>
            <span class="toggle t-on">On<i></i></span>
        </div>
        <div class="field-well drill">Add drill-through fields here</div>
    </aside>

    <aside class="data-pane">
        <div class="pane-head data-head">
            <span>Data</span>
            <svg class="chev"><use href="#dr"/></svg>
        </div>
        <div class="data-search">
            <svg class="lens-or"><use href="#lens"/></svg>
            <span>Search</span>
        </div>
        <div class="field-list">
            <div class="field-scroll">
                <div class="fld"><i></i><span>net_change</span></div>
                <div class="fld"><i></i><span>percentage_ch...</span></div>
                <div class="fld"><i></i><span>total_hires</span></div>
                <div class="fld"><i></i><span>total_terminati...</span></div>
                <div class="tbl"><svg class="tcv"><use href="#cv"/></svg><svg class="tic"><use href="#tb"/></svg>Gender</div>
                <div class="fld"><i></i><span>Count</span></div>
                <div class="fld"><i></i><span>gender</span></div>
                <div class="tbl"><svg class="tcv"><use href="#cv"/></svg><svg class="tic"><use href="#tb"/></svg>Gender_department</div>
                <div class="fld"><i></i><svg><use href="#sg"/></svg><span>COUNT(*)</span></div>
                <div class="fld"><i></i><span>department</span></div>
                <div class="fld"><i></i><span>gender</span></div>
                <div class="tbl"><svg class="tcv"><use href="#cv"/></svg><svg class="tic"><use href="#tb"/></svg>gender_th_tt</div>
                <div class="fld"><i></i><span>gender</span></div>
                <div class="fld"><i></i><svg><use href="#sg"/></svg><span>net_change</span></div>
                <div class="fld"><i></i><svg><use href="#sg"/></svg><span>percentage_ch...</span></div>
                <div class="fld"><i></i><svg><use href="#sg"/></svg><span>total_hires</span></div>
                <div class="fld"><i></i><svg><use href="#sg"/></svg><span>total_terminati...</span></div>
                <div class="tbl"><svg class="tcv"><use href="#cv"/></svg><svg class="tic"><use href="#tb"/></svg>Location</div>
                <div class="fld"><i></i><span>location</span></div>
                <div class="fld"><i></i><svg><use href="#sg"/></svg><span>location_counts</span></div>
                <div class="tbl"><svg class="tcv"><use href="#cv"/></svg><svg class="tic"><use href="#tb"/></svg>location_state</div>
                <div class="fld"><i></i><svg><use href="#sg"/></svg><span>COUNT(*)</span></div>
                <div class="fld"><i></i><span>location_state</span></div>
                <div class="tbl"><svg class="tcv"><use href="#cv"/></svg><svg class="tic"><use href="#tb"/></svg>Race</div>
                <div class="fld"><i></i><svg><use href="#sg"/></svg><span>Count</span></div>
                <div class="fld"><i></i><span>race</span></div>
                <div class="tbl"><svg class="tcv"><use href="#cv"/></svg><svg class="tic"><use href="#tb"/></svg>tenure_dist</div>
                <div class="fld"><i></i><svg><use href="#sg"/></svg><span>hires</span></div>
                <div class="fld"><i></i><svg><use href="#sg"/></svg><span>net_change</span></div>
                <div class="fld"><i></i><svg><use href="#sg"/></svg><span>percentage_ch...</span></div>
                <div class="fld"><i></i><svg><use href="#sg"/></svg><span>terminations</span></div>
                <div class="fld"><i></i><svg><use href="#sg"/></svg><span>year</span></div>
            </div>
            <div class="scroll-thumb"></div>
        </div>
    </aside>
</main>

<footer class="statusbar">
    <span class="page-count">Page 2 of 3</span>
    <span class="zoom-minus">-</span>
    <span class="zoom-track"><i></i></span>
    <span class="zoom-plus">+</span>
    <span class="zoom-val">112%</span>
    <svg class="fit" viewBox="0 0 16 12"><path d="M1 4V1h4M11 1h4v3M15 8v3h-4M5 11H1V8"/></svg>
    <span class="update">Update available (click to download)</span>
</footer>
</body>
</html>
```

FILE: styles.css
```css
* {
    margin: 0;
    padding: 0;
    box-sizing: border-box;
}

html, body {
    width: 1918px;
    height: 1025px;
    overflow: hidden;
}

body {
    font-family: Roboto, "Noto Sans", sans-serif;
    font-size: 12px;
    color: #252423;
    background: #f3f2f1;
    display: flex;
    flex-direction: column;
}

.defs {
    position: absolute;
}

symbol path, symbol circle {
    fill: none;
    stroke: currentColor;
    stroke-width: 1;
}

/* title bar */
.titlebar {
    height: 34px;
    flex: none;
    background: #3b3a39;
    color: #fff;
    display: flex;
    align-items: center;
    padding-left: 17px;
}

.tb-icon {
    width: 16px;
    height: 16px;
    fill: none;
    stroke: #d2d0ce;
    stroke-width: 1.2;
    margin-right: 14px;
}

.tb-icon.redo { stroke: #797775; margin-right: 9px; }

.app-title {
    width: 730px;
    font-size: 12px;
    white-space: nowrap;
}

.global-search {
    width: 399px;
    height: 24px;
    background: #c8c6c4;
    border-radius: 2px;
    display: flex;
    align-items: center;
    padding-left: 17px;
    color: #2f5f58;
    font-size: 13.5px;
    gap: 12px;
}

.lens-dark {
    width: 16px;
    height: 16px;
    color: #252423;
}

.sign-in {
    margin-left: 476px;
    font-size: 13px;
}

.avatar {
    width: 20px;
    height: 20px;
    margin-left: 10px;
}

.av-bg { fill: #f3f2f1; }
.av-line { fill: none; stroke: #252423; stroke-width: 1.2; }

.win-btn {
    width: 12px;
    height: 12px;
    fill: none;
    stroke: #f3f2f1;
    stroke-width: 1;
    margin-left: 31px;
}

/* ribbon */
.ribbon {
    height: 126px;
    flex: none;
    background: #f3f2f1;
    box-shadow: 0 1px 3px rgba(0, 0, 0, 0.25);
    position: relative;
    z-index: 2;
}

.ribbon-tabs {
    height: 36px;
    display: grid;
    grid-template-columns: 59px 69px 66px 91px 61px 87px auto;
    justify-content: start;
    padding-left: 23px;
    font-size: 14px;
    line-height: 32px;
    color: #3b3a39;
}

.tab-active {
    position: relative;
    color: #252423;
}

.tab-active::after {
    content: "";
    position: absolute;
    left: 0;
    bottom: 4px;
    width: 38px;
    height: 3px;
    background: #117865;
}

.ribbon-body {
    display: flex;
    height: 88px;
}

.group {
    flex: none;
    border-right: 1px solid #c8c6c4;
    display: flex;
    flex-direction: column;
}

.group-items {
    display: flex;
    height: 76px;
}

.group-label {
    text-align: center;
    font-size: 11px;
    line-height: 14px;
    color: #605e5c;
}

.group-clipboard { width: 161px; padding-left: 8px; }
.group-data { width: 346px; padding-left: 4px; }
.group-queries { width: 117px; padding-left: 12px; }
.group-insert { width: 148px; padding-left: 8px; }
.group-calc { width: 115px; padding-left: 8px; }
.group-sens { width: 74px; padding-left: 6px; }
.group-share { width: 60px; padding-left: 4px; }

.group-data .group-label { margin-left: -4px; }
.group-clipboard .group-label { margin-left: -8px; }
.group-queries .group-label { margin-left: -12px; }
.group-insert .group-label,
.group-calc .group-label { margin-left: -8px; }
.group-sens .group-label { margin-left: -6px; }
.group-share .group-label { margin-left: -4px; }

.rb-btn {
    flex: none;
    text-align: center;
    font-size: 12px;
    line-height: 16px;
    color: #3b3a39;
    padding-top: 6px;
    white-space: nowrap;
}

.rb-btn span {
    display: block;
    margin: 2px -4px 0;
}

.rb-btn.off { color: #a19f9d; }

.w38 { width: 38px; }
.w40 { width: 40px; }
.w42 { width: 42px; }
.w45 { width: 45px; }
.w48 { width: 48px; }
.w49 { width: 49px; }
.w50 { width: 50px; }
.w54 { width: 54px; }
.w60 { width: 60px; }

.rb-icon {
    width: 32px;
    height: 32px;
    display: block;
    margin: 0 auto;
}

.caret {
    display: inline-block;
    width: 5px;
    height: 5px;
    border-right: 1px solid #3b3a39;
    border-bottom: 1px solid #3b3a39;
    transform: rotate(45deg);
    margin: 0 0 3px 4px;
}

.off .caret {
    border-color: #a19f9d;
    margin-left: 0;
}

.clip-list {
    list-style: none;
    margin-left: 5px;
    padding-top: 2px;
    color: #a19f9d;
}

.clip-list li {
    display: flex;
    align-items: center;
    gap: 4px;
    height: 24px;
    white-space: nowrap;
}

.clip-list svg {
    width: 15px;
    height: 15px;
}

.ribbon-collapse {
    position: absolute;
    right: 3px;
    bottom: 6px;
    width: 10px;
    height: 7px;
    fill: none;
    stroke: #252423;
    stroke-width: 1.5;
}

/* shared icon paints */
.d { fill: none; stroke: #3b3a39; stroke-width: 1; }
.d2 { fill: none; stroke: #3b3a39; stroke-width: 1.5; }
.d-w { fill: #fff; stroke: #3b3a39; stroke-width: 1; }
.w { fill: #fff; stroke: #3b3a39; stroke-width: 1; }
.b { fill: #6fa9e4; stroke: #106ebe; stroke-width: 1; }
.g { fill: #bdbbb9; stroke: #8a8886; stroke-width: 1; }
.g1 { fill: #c8c6c4; stroke: #8a8886; stroke-width: 1; }
.g0 { fill: #f3f2f1; stroke: #a19f9d; stroke-width: 1; }
.o { fill: #fbeedb; stroke: #f2c48e; stroke-width: 1; }
.r { fill: #fde7d2; stroke: #c8641b; stroke-width: 1.3; }
.gr { fill: none; stroke: #2e9c4f; stroke-width: 1.4; }
.bl { fill: none; stroke: #106ebe; stroke-width: 1.4; }
.bs { fill: #6fa9e4; }
.blue { fill: none; stroke: #1c7fc4; stroke-width: 1.3; }
.blue-l { fill: #fff; stroke: #106ebe; stroke-width: 1.2; }
.blue-sq { fill: #1c7fc4; }
.b-fill { fill: #6fa9e4; stroke: #106ebe; stroke-width: 1; }
.lb-fill { fill: #bcd9ee; stroke: #9cc7e6; stroke-width: 1; }
.s-off { fill: none; stroke: #a19f9d; stroke-width: 1; }
.s-blue { fill: none; stroke: #a9cfe9; stroke-width: 1; }
.fill-d { fill: #3b3a39; }
.fill-g { fill: #a6a4a2; }
.fill-o { fill: #e8912d; }
.fill-or { fill: #d6741c; }
.oo { fill: none; stroke: #e8912d; stroke-width: 1.5; }
.fill-bl { fill: #6fa9e4; stroke: #106ebe; stroke-width: .6; }
.fill-gr { fill: #2e9c4f; }
.fill-red { fill: #e33b3b; }
.fill-grad { fill: #3b9bd6; }
.fill-xl { fill: #117c43; }
.xl { fill: #fff; font-size: 10px; font-weight: 700; text-anchor: middle; }
.tg { fill: #117865; stroke: #252423; stroke-width: 1; stroke-dasharray: 1.5 1; }
.clock { fill: #fff; stroke: #1c7fc4; stroke-width: 1.4; }
.pen { fill: #fff; stroke: #1c7fc4; stroke-width: 1.3; }
.keys { fill: #3b3a39; }
.bolt { fill: #f5b83d; stroke: #c8641b; stroke-width: 1; }
.g-ring { fill: none; stroke: #a6a4a2; stroke-width: 4; }
.b-ring { fill: none; stroke: #6fa9e4; stroke-width: 4; }
.funnel-d { fill: #fff; stroke: #3b3a39; stroke-width: 1; }
.pur { fill: #fff; stroke: #a349a4; stroke-width: 1.2; }
.dots { fill: none; stroke: #a5642c; stroke-width: 1.5; }
.num { fill: #1c7fc4; font-size: 8px; font-weight: 500; text-anchor: middle; dominant-baseline: central; }

/* workspace */
.workspace {
    flex: none;
    height: 849px;
    display: flex;
}

.rail {
    width: 41px;
    flex: none;
    border-right: 1px solid #d2d0ce;
    padding-top: 1px;
}

.rail-item {
    height: 39px;
    display: flex;
    align-items: center;
    justify-content: center;
}

.rail-item svg {
    width: 18px;
    height: 18px;
}

.rail-active {
    border-left: 3px solid #117865;
    padding-right: 3px;
}

.center {
    width: 1517px;
    flex: none;
    display: flex;
    flex-direction: column;
}

.canvas-row {
    height: 813px;
    display: flex;
    background: #fff;
}

.canvas {
    width: 1484px;
    flex: none;
    border-right: 1px solid #a19f9d;
    overflow: hidden;
}

.report-page {
    margin-left: 25px;
    width: 1436px;
    height: 806px;
    border: 2px dotted #605e5c;
    border-top: none;
    display: flex;
    padding-left: 28px;
    gap: 15px;
}

.map-visual {
    width: 649px;
    flex: none;
    padding-top: 40px;
}

.visual-title {
    height: 20px;
    margin-bottom: 5px;
    text-align: center;
    font-size: 17px;
    line-height: 20px;
    color: #252423;
    letter-spacing: 0.7px;
}

.map {
    width: 649px;
    height: 689px;
    display: block;
}

/* map layers */
.m-land { fill: #efefea; }
.m-green { filter: url(#wig-fine); }
.m-green ellipse { fill: #e4ecd2; }
.m-green .m-green2 { fill: #c9d9b0; }
.m-water { filter: url(#wig-fine); }
.m-water polygon, .m-water ellipse { fill: #a5c3ef; }
.m-dash { fill: none; stroke: #b8b8b2; stroke-width: .9; stroke-dasharray: 4 3; }
.m-road { fill: none; stroke: #cbb6df; stroke-width: 1.7; stroke-linejoin: round; filter: url(#wig); }
.m-road-core { stroke: #f3ecf8; stroke-width: .6; filter: url(#wig); }
.m-border { fill: none; stroke: #66666a; stroke-width: 2; stroke-linejoin: round; opacity: .8; }
.m-st text { fill: #6d5f5f; font-size: 13px; text-anchor: middle; dominant-baseline: central; }
.m-ct text { fill: #5e5a5a; font-size: 14px; text-anchor: middle; dominant-baseline: central; }
.m-big text { fill: #555658; font-size: 18px; text-anchor: middle; dominant-baseline: central; }
.m-big .m-left { text-anchor: start; fill: #333; }
.m-dots circle { fill: #333; stroke: #fff; stroke-width: 1; }
.m-cap { fill: #e23a1e; stroke: #fff; stroke-width: 1; }
.m-cap2 { fill: #f08a24; stroke: #fff; stroke-width: 1; }
.m-bubble circle { fill: rgba(112, 26, 132, 0.72); stroke: #2a0a3a; stroke-width: 1; }
.m-tip rect { fill: rgba(90, 90, 90, 0.82); }
.m-tip-text text { fill: #fff; font-size: 14px; text-anchor: middle; dominant-baseline: central; }
.ms-r { fill: #f25022; }
.ms-g { fill: #7fba00; }
.ms-b { fill: #00a4ef; }
.ms-y { fill: #ffb900; }
.m-bing { fill: #737373; font-size: 10.5px; dominant-baseline: central; }
.m-copy { fill: #333; font-size: 10px; dominant-baseline: central; stroke: #fff; stroke-width: 2; paint-order: stroke; }
.m-terms { fill: #1a4fb4; font-size: 10px; dominant-baseline: central; text-decoration: underline; }

/* charts */
.chart-col {
    width: 660px;
    flex: none;
    padding-top: 20px;
    display: flex;
    flex-direction: column;
    gap: 20px;
}

.chart {
    display: block;
    width: 660px;
}

.chart-top { height: 400px; }
.chart-bottom { height: 350px; }

.c-title {
    fill: #252423;
    font-size: 17px;
    letter-spacing: 0.9px;
    text-anchor: middle;
    dominant-baseline: central;
}

.c-legend {
    fill: #605e5c;
    font-size: 14.5px;
    dominant-baseline: central;
}

.dot-hires { fill: #118dff; }
.dot-term { fill: #12239e; }

.c-grid {
    fill: none;
    stroke: #c8c6c4;
    stroke-width: 1;
    stroke-dasharray: 1 5;
}

.line-hires, .line-term {
    fill: none;
    stroke-width: 3.2;
    stroke-linejoin: round;
}

.line-hires { stroke: #118dff; }
.line-term { stroke: #12239e; }

.c-tick text {
    fill: #605e5c;
    font-size: 13px;
    text-anchor: middle;
    dominant-baseline: central;
}

.c-end text { text-anchor: end; }
.c-start text { text-anchor: start; }

.c-axis {
    fill: #252423;
    font-family: "DejaVu Sans", sans-serif;
    font-size: 14.5px;
    text-anchor: middle;
    dominant-baseline: central;
}

.c-year {
    fill: #252423;
    font-size: 15px;
    text-anchor: middle;
    dominant-baseline: central;
}

/* filters strip */
.filters {
    width: 33px;
    flex: none;
    border-right: 1px solid #d2d0ce;
    display: flex;
    flex-direction: column;
    align-items: center;
    padding-top: 13px;
}

.chev {
    width: 14px;
    height: 12px;
    color: #252423;
}

.funnel {
    width: 12px;
    height: 12px;
    margin-top: 16px;
    fill: none;
    stroke: #252423;
    stroke-width: 1;
}

.filters-label {
    writing-mode: vertical-rl;
    font-size: 14px;
    font-weight: 500;
    margin-top: 10px;
    letter-spacing: 0.3px;
    color: #252423;
}

/* page tabs */
.page-tabs {
    height: 36px;
    flex: none;
    display: flex;
    border-right: 1px solid #d2d0ce;
    border-bottom: 1px solid #d2d0ce;
}

.tab-nav {
    width: 40px;
    flex: none;
    border-right: 1px solid #a19f9d;
    display: flex;
    align-items: center;
    justify-content: space-between;
    padding: 0 8px;
}

.tri-l, .tri-r {
    width: 0;
    height: 0;
    border-top: 4px solid transparent;
    border-bottom: 4px solid transparent;
}

.tri-l { border-right: 5px solid #c8c6c4; }
.tri-r { border-left: 5px solid #c8c6c4; }

.page-tab {
    width: 77px;
    flex: none;
    border-right: 1px solid #c8c6c4;
    text-align: center;
    font-size: 12.5px;
    line-height: 35px;
    color: #3b3a39;
    position: relative;
}

.page-current {
    background: #fff;
    border-bottom: 4px solid #117865;
    color: #252423;
}

.tab-x {
    position: absolute;
    top: 3px;
    right: 3px;
    font-size: 10px;
    line-height: 14px;
}

.page-add {
    width: 39px;
    height: 32px;
    margin-top: 2px;
    flex: none;
    background: #117865;
    color: #fff;
    text-align: center;
    font-size: 20px;
    font-weight: 700;
    line-height: 32px;
}

/* visualizations pane */
.vis-pane, .data-pane {
    flex: none;
    border-right: 1px solid #d2d0ce;
    border-bottom: 1px solid #d2d0ce;
}

.vis-pane { width: 181px; }
.data-pane { width: 179px; border-right: none; }

.pane-head {
    height: 38px;
    display: flex;
    align-items: center;
    justify-content: space-between;
    padding: 0 6px 0 9px;
    font-size: 16px;
    font-weight: 500;
    color: #252423;
}

.build-label {
    height: 14px;
    line-height: 14px;
    padding-left: 9px;
    font-weight: 500;
}

.build-row {
    margin-top: 5px;
    height: 32px;
    display: flex;
    padding-left: 9px;
}

.build-active {
    width: 32px;
    height: 32px;
    background: #c8c6c4;
    border-radius: 2px;
    padding: 4px;
}

.build-active svg {
    display: block;
    width: 24px;
    height: 26px;
}

.format-icon {
    width: 24px;
    height: 26px;
    margin: 4px 0 0 38px;
}

.vis-sep {
    margin-top: 12px;
    height: 1px;
    background: #8a8886;
    position: relative;
}

.vis-sep i {
    position: absolute;
    left: 20px;
    top: -5px;
    width: 10px;
    height: 10px;
    background: #f3f2f1;
    border-top: 1px solid #a19f9d;
    border-left: 1px solid #a19f9d;
    transform: rotate(45deg);
}

.viz-grid {
    display: grid;
    grid-template-columns: repeat(6, 28px);
    grid-auto-rows: 28px;
    padding: 6px 0 0 6px;
    height: 206px;
    align-items: center;
    justify-items: center;
}

.viz-grid svg {
    width: 19px;
    height: 19px;
}

.viz-letter {
    font-size: 17px;
    font-weight: 700;
    color: #1c7fc4;
}

.viz-py {
    font-size: 19px;
}

.vis-sep2 {
    height: 1px;
    background: #d2d0ce;
}

.well-label {
    margin: 9px 0 0 12px;
    line-height: 16px;
    color: #3b3a39;
}

.field-well {
    margin: 5px 5px 0 4px;
    background: #fff;
    border: 1px dashed #c8c6c4;
    border-radius: 2px;
    color: #252423;
    white-space: nowrap;
}

.field-well.tall {
    height: 28px;
    line-height: 26px;
    padding-left: 10px;
}

.field-well.drill {
    margin-top: 11px;
    height: 25px;
    line-height: 23px;
    padding-left: 8px;
}

.drill-title {
    margin: 11px 0 0 12px;
    line-height: 16px;
    font-weight: 500;
    color: #3b3a39;
}

.toggle-row {
    margin: 11px 5px 0 12px;
    height: 16px;
    display: flex;
    justify-content: space-between;
    align-items: center;
    color: #3b3a39;
}

.toggle-row.first { margin-top: 9px; }

.toggle {
    width: 32px;
    height: 16px;
    border-radius: 8px;
    font-size: 9.5px;
    display: flex;
    align-items: center;
    gap: 2px;
    padding: 0 2px 0 5px;
}

.toggle i {
    width: 8px;
    height: 8px;
    border-radius: 50%;
    flex: none;
}

.t-off {
    background: #fff;
    border: 1px solid #8a8886;
    color: #605e5c;
    padding-left: 4px;
}

.t-off i { background: #605e5c; }

.t-on {
    background: #605e5c;
    color: #fff;
}

.t-on i { background: #fff; }

/* data pane */
.data-head {
    padding: 0 5px 0 9px;
}

.data-search {
    margin: 7px 2px 0 5px;
    height: 27px;
    border: 1px solid #605e5c;
    border-radius: 2px;
    background: #fff;
    display: flex;
    align-items: center;
    gap: 6px;
    padding-left: 7px;
    font-size: 13.5px;
    color: #605e5c;
}

.lens-or {
    width: 15px;
    height: 15px;
    color: #a5642c;
}

.field-list {
    margin-top: 8px;
    height: 768px;
    overflow: hidden;
    position: relative;
}

.field-scroll {
    margin-top: -8px;
}

.fld, .tbl {
    height: 24px;
    white-space: nowrap;
    color: #3b3a39;
    font-size: 12.5px;
    line-height: 24px;
}

.fld {
    display: grid;
    grid-template-columns: 20px 18px auto;
    align-items: center;
    justify-content: start;
    padding-left: 39px;
}

.fld i {
    width: 13px;
    height: 13px;
    border: 1px solid #8a8886;
    border-radius: 2px;
    grid-column: 1;
}

.fld svg {
    width: 13px;
    height: 14px;
    color: #3b3a39;
    grid-column: 2;
}

.fld span {
    grid-column: 3;
}

.tbl {
    display: flex;
    align-items: center;
    padding-left: 8px;
}

.tcv {
    width: 11px;
    height: 8px;
    color: #8a8886;
}

.tic {
    width: 14px;
    height: 14px;
    margin: 0 5px 0 4px;
    color: #252423;
}

.scroll-thumb {
    position: absolute;
    right: 2px;
    top: 201px;
    width: 8px;
    height: 559px;
    background: #c8c6c4;
}

/* status bar */
.statusbar {
    flex: none;
    height: 16px;
    position: relative;
    overflow: hidden;
    font-size: 13px;
    line-height: 24px;
    color: #605e5c;
    padding-left: 5px;
}

.zoom-minus, .zoom-track, .zoom-plus, .zoom-val, .fit, .update {
    position: absolute;
    top: 0;
}

.zoom-minus { left: 1507px; }
.zoom-plus { left: 1621px; font-size: 15px; }
.zoom-val { left: 1644px; }
.update { left: 1723px; color: #5c2e91; white-space: nowrap; font-size: 12px; }

.zoom-track {
    left: 1516px;
    top: 11px;
    width: 100px;
    height: 1px;
    background: #605e5c;
}

.zoom-track i {
    position: absolute;
    left: 48px;
    top: -5px;
    width: 4px;
    height: 10px;
    background: #605e5c;
}

.fit {
    left: 1689px;
    top: 6px;
    width: 16px;
    height: 12px;
    fill: none;
    stroke: #605e5c;
}
```
